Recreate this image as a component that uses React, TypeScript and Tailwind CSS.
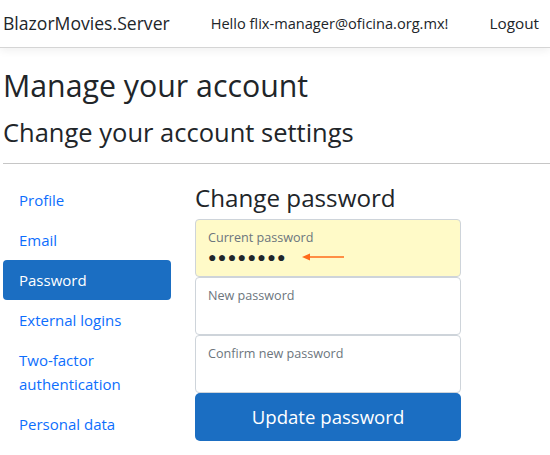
import { useState } from 'react';

const NAV = [
  { key: 'profile', label: 'Profile' },
  { key: 'email', label: 'Email' },
  { key: 'password', label: 'Password' },
  { key: 'external', label: 'External logins' },
  { key: '2fa', label: 'Two-factor authentication' },
  { key: 'personal', label: 'Personal data' },
];

const FONT = "font-['Segoe_UI','Open_Sans','Noto_Sans',sans-serif]";

function FloatingField({ label, value, autofill }: { label: string; value?: string; autofill?: boolean }) {
  return (
    <div
      className={`relative h-[58px] border border-[#ced4da] rounded-[4px] px-3 pt-[10px] ${
        autofill ? 'bg-[#fffac8]' : 'bg-white'
      }`}
    >
      <div className="text-[12.6px] leading-[16px] text-[#6c757d] whitespace-nowrap">{label}</div>
      {value && (
        <div className="flex items-center gap-[14px] mt-[2px] h-[18px]">
          <span className="text-[14px] tracking-[1.4px] text-[#212529] leading-none">{value}</span>
          <svg width="44" height="10" viewBox="0 0 44 10">
            <line x1="8" y1="5" x2="43" y2="5" stroke="#ff6a1a" strokeWidth="1.3" />
            <path d="M1 5 L9 1.5 L9 8.5 Z" fill="#ff6a1a" />
          </svg>
        </div>
      )}
    </div>
  );
}

export default function App() {
  const [active, setActive] = useState('password');

  return (
    <div className={`${FONT} w-[550px] h-[455px] overflow-hidden bg-white text-[#212529]`}>
      {/* Top bar */}
      <div className="h-[48px] flex items-center justify-between pl-[3px] pr-[11px] border-b border-[#d5d5d5] shadow-[0_3px_8px_rgba(0,0,0,0.06)] whitespace-nowrap">
        <span className="text-[17.6px]">BlazorMovies.Server</span>
        <div className="flex items-center gap-[41px]">
          <span className="text-[14.6px]">Hello flix-manager@oficina.org.mx!</span>
          <span className="text-[15.3px]">Logout</span>
        </div>
      </div>

      <div className="pl-[3px] pt-[20px]">
        <h1 className="text-[30.3px] leading-[36px] font-normal">Manage your account</h1>
        <h2 className="text-[25.5px] leading-[31px] mt-[13px] font-normal">Change your account settings</h2>
        <div className="h-px bg-[#c6c6c6] mt-[15px]" />

        <div className="flex mt-[16px]">
          {/* Side nav */}
          <div className="w-[168px] flex flex-col shrink-0">
            {NAV.map((n) => (
              <button
                key={n.key}
                onClick={() => setActive(n.key)}
                className={`text-left px-4 py-2 rounded-[4px] text-[15px] leading-[24px] ${
                  active === n.key ? 'bg-[#1b6ec2] text-white' : 'text-[#0d6efd]'
                }`}
              >
                {n.label}
              </button>
            ))}
          </div>

          {/* Form */}
          <div className="ml-[24px] w-[266px] flex flex-col">
            <h3 className="text-[24.2px] leading-[29px] mt-[3px] mb-[7px] font-normal">Change password</h3>
            <FloatingField label="Current password" value="●●●●●●●●" autofill />
            <FloatingField label="New password" />
            <FloatingField label="Confirm new password" />
            <button className="h-[48px] rounded-[5px] bg-[#1b6ec2] text-white text-[18.6px]">Update password</button>
          </div>
        </div>
      </div>
    </div>
  );
}
